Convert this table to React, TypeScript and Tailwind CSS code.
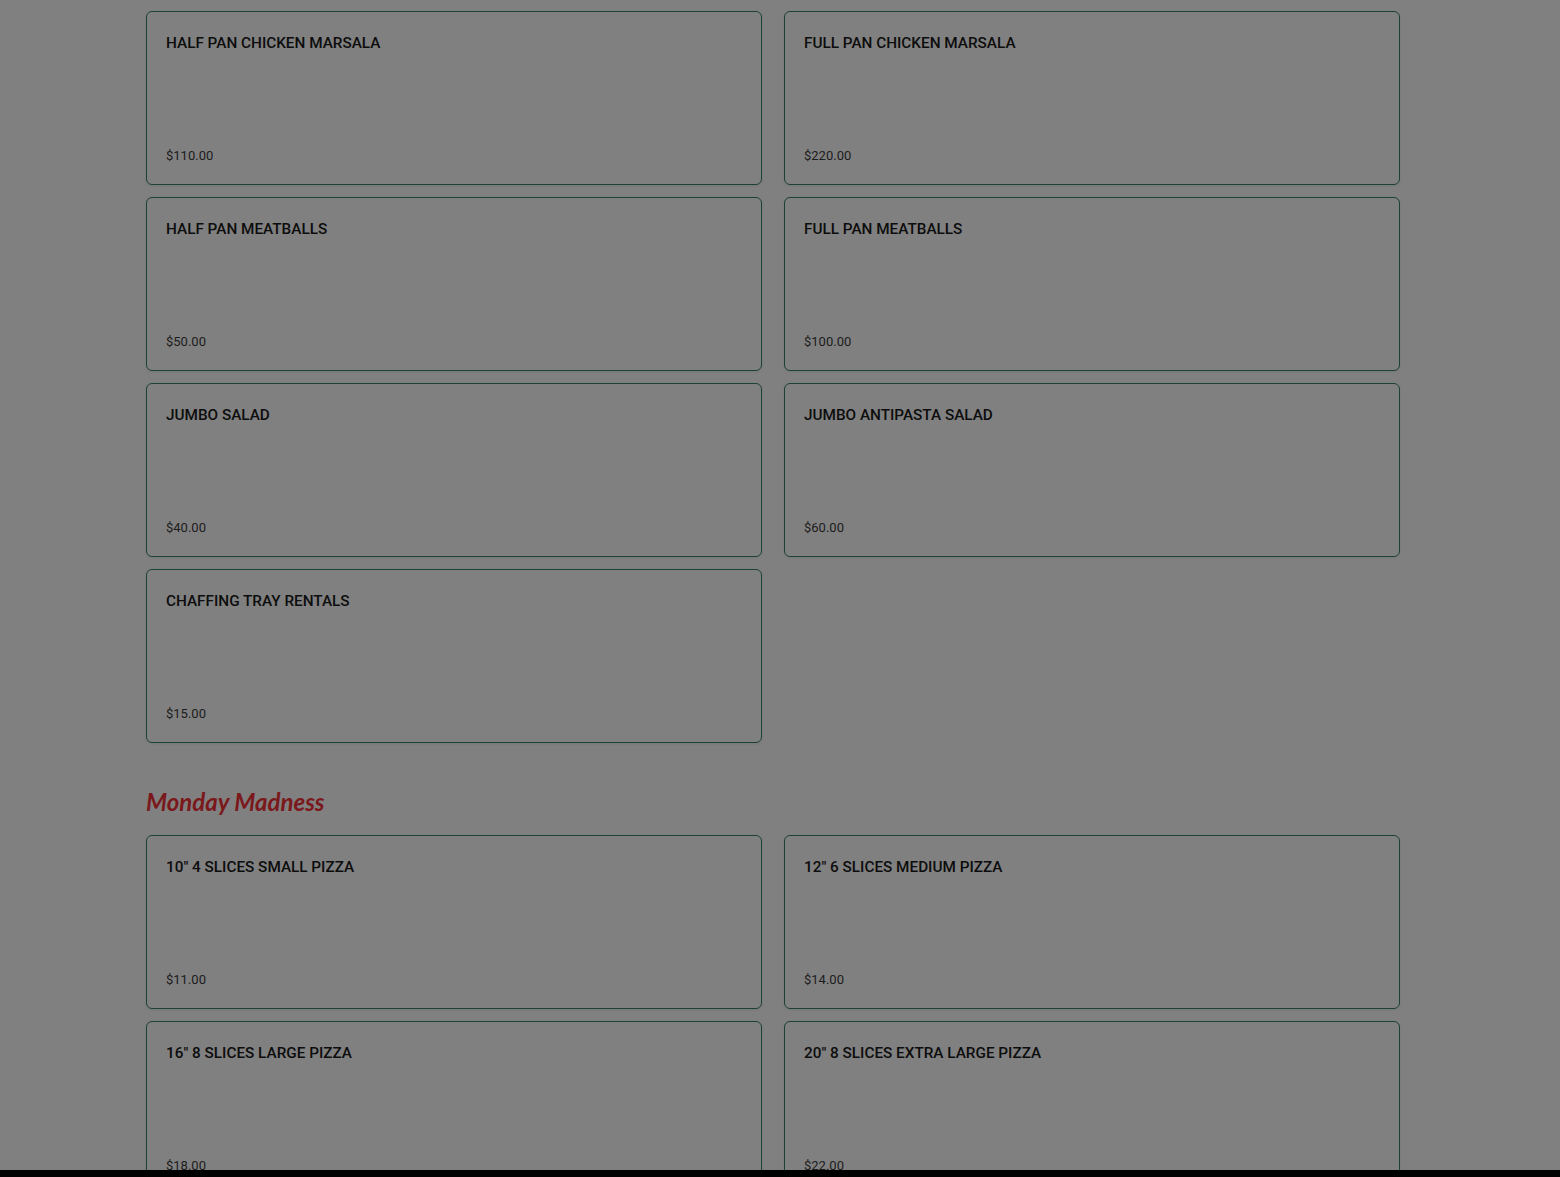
const catering = [
  { title: "HALF PAN CHICKEN MARSALA", price: "$110.00" },
  { title: "FULL PAN CHICKEN MARSALA", price: "$220.00" },
  { title: "HALF PAN MEATBALLS", price: "$50.00" },
  { title: "FULL PAN MEATBALLS", price: "$100.00" },
  { title: "JUMBO SALAD", price: "$40.00" },
  { title: "JUMBO ANTIPASTA SALAD", price: "$60.00" },
  { title: "CHAFFING TRAY RENTALS", price: "$15.00" },
];

const monday = [
  { title: '10" 4 SLICES SMALL PIZZA', price: "$11.00" },
  { title: '12" 6 SLICES MEDIUM PIZZA', price: "$14.00" },
  { title: '16" 8 SLICES LARGE PIZZA', price: "$18.00" },
  { title: '20" 8 SLICES EXTRA LARGE PIZZA', price: "$22.00" },
];

type Item = { title: string; price: string };

const MenuCard = ({ item }: { item: Item }) => {
  return (
    <div className="flex h-[174px] flex-col justify-between rounded-[6px] border border-[#1c4234] bg-[#808080] pb-5 pl-[19px] pr-5 pt-[21px] shadow-[0_1px_3px_rgba(0,0,0,0.08)]">
      <div className="text-[15.3px] font-medium leading-5 text-[#0d0d0d]">
        {item.title}
      </div>
      <div className="text-[13px] leading-4 text-[#1c1c1c]">{item.price}</div>
    </div>
  );
};

const App = () => {
  return (
    <div
      className="flex h-[1177px] w-full flex-col overflow-hidden bg-[#808080]"
      style={{ fontFamily: "Roboto, 'Liberation Sans', sans-serif" }}
    >
      <div className="flex-1 overflow-hidden">
        <div className="ml-[146px] w-[1254px] pt-[11px]">
          <div className="grid grid-cols-2 gap-x-[22px] gap-y-3">
            {catering.map((item) => (
              <MenuCard key={item.title} item={item} />
            ))}
          </div>

          <h2
            className="mb-[17px] mt-[43px] text-[24px] font-bold italic leading-8 text-[#7a181c]"
            style={{ fontFamily: "Lato, sans-serif" }}
          >
            Monday Madness
          </h2>

          <div className="grid grid-cols-2 gap-x-[22px] gap-y-3">
            {monday.map((item) => (
              <MenuCard key={item.title} item={item} />
            ))}
          </div>
        </div>
      </div>
      <div className="h-[7px] w-full shrink-0 bg-black" />
    </div>
  );
};

export default App;
